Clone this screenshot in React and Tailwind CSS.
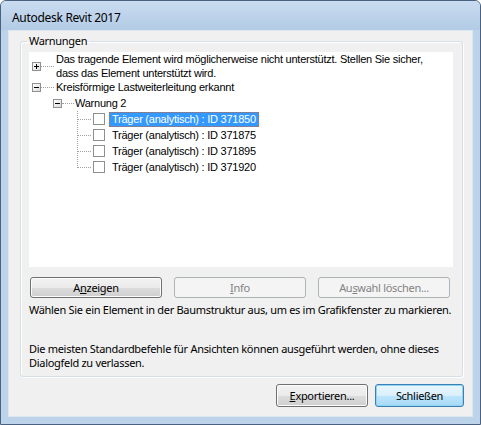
import React from "react";

const ui = { fontFamily: '"Noto Sans", "Open Sans", sans-serif' };
const tree = { fontFamily: '"Liberation Sans", Arial, sans-serif' };

function Expander({ minus }) {
  return (
    <span className="relative inline-block shrink-0 w-[9px] h-[9px] border border-[#919191] bg-gradient-to-br from-white to-[#dcdcdc]">
      <span className="absolute left-[1px] top-[3px] w-[5px] h-[1px] bg-black" />
      {!minus && <span className="absolute left-[3px] top-[1px] w-[1px] h-[5px] bg-black" />}
    </span>
  );
}

function HDots({ w }) {
  return <span className="inline-block shrink-0 h-0 border-t border-dotted border-[#a0a0a0]" style={{ width: w }} />;
}

function ChildRow({ id, selected }) {
  return (
    <div className="flex items-center h-[16px]">
      <HDots w={13} />
      <span className="ml-[2px] w-[12px] h-[12px] border border-[#8e8f8f] bg-white shrink-0" />
      <span
        className={
          "ml-[4px] h-[15px] px-[3px] leading-[15px] whitespace-nowrap " +
          (selected
            ? "bg-[#3399ff] text-white outline outline-1 outline-dotted outline-[#cc6633] -outline-offset-1"
            : "text-black")
        }
      >
        Träger (analytisch) : ID {id}
      </span>
    </div>
  );
}

function Btn({ children, disabled, dflt, className = "" }) {
  let cls =
    "rounded-[3px] border text-[11px] tracking-[-0.3px] flex items-center justify-center leading-none ";
  if (disabled) cls += "border-[#adb2b5] bg-[#f4f4f4] text-[#838383] ";
  else if (dflt)
    cls +=
      "border-[#3c7fb1] bg-[linear-gradient(#eaf6fd_0%,#d9f0fc_50%,#bee6fd_50%,#a7d9f5_100%)] text-black shadow-[inset_0_0_0_1px_#8fd3f7] ";
  else
    cls +=
      "border-[#707070] bg-[linear-gradient(#f2f2f2_0%,#ebebeb_50%,#dddddd_50%,#cfcfcf_100%)] text-black shadow-[inset_0_0_0_1px_#fcfcfc] ";
  return (
    <div className={cls + className} style={ui}>
      {children}
    </div>
  );
}

export default function App() {
  return (
    <div className="w-[481px] h-[425px] bg-white">
      <div className="w-[481px] h-[425px] rounded-t-[6px] border border-[#4a6280] bg-[#bcd3ea] flex flex-col overflow-hidden">
        <div
          className="h-[29px] pt-[9px] pl-[11px] bg-gradient-to-b from-[#c9dcf0] to-[#b3cbe6] text-[12px] leading-[16px] tracking-[-0.3px] text-black"
          style={ui}
        >
          Autodesk Revit 2017
        </div>
        <div className="mx-[7px] h-[387px] bg-[#f0f0f0] border border-[#dde7f1] flex flex-col">
          <fieldset className="mt-[3px] ml-[11px] w-[443px] h-[343px] border border-[#d5dfe5] rounded-[3px] shadow-[1px_1px_0_#ffffff,inset_1px_1px_0_#ffffff] pl-[8px] pr-[9px] pt-[4px] pb-0 min-w-0">
            <legend className="ml-[-2px] px-[2px] text-[11px] leading-[14px] tracking-[-0.3px] text-black" style={ui}>
              Warnungen
            </legend>
            <div className="w-[424px] h-[215px] bg-white text-[11px] tracking-[-0.24px] text-black" style={tree}>
              <div className="flex items-center h-[28px] pl-[3px]">
                <Expander />
                <HDots w={13} />
                <div className="ml-[2px] leading-[14px] whitespace-nowrap">
                  Das tragende Element wird möglicherweise nicht unterstützt. Stellen Sie sicher,
                  <br />
                  dass das Element unterstützt wird.
                </div>
              </div>
              <div className="flex items-center h-[15px] pl-[3px]">
                <Expander minus />
                <HDots w={13} />
                <span className="ml-[2px] whitespace-nowrap">Kreisförmige Lastweiterleitung erkannt</span>
              </div>
              <div className="flex items-center h-[16px] pl-[24px]">
                <Expander minus />
                <HDots w={12} />
                <span className="ml-[1px] whitespace-nowrap">Warnung 2</span>
              </div>
              <div className="flex ml-[48px]">
                <div className="w-0 border-l border-dotted border-[#a0a0a0] h-[57px]" />
                <div className="flex flex-col">
                  <ChildRow id="371850" selected />
                  <ChildRow id="371875" />
                  <ChildRow id="371895" />
                  <ChildRow id="371920" />
                </div>
              </div>
            </div>
            <div className="flex gap-[12px] mt-[10px] ml-[1px]">
              <Btn className="w-[132px] h-[21px]">
                <span>
                  A<u>n</u>zeigen
                </span>
              </Btn>
              <Btn disabled className="w-[132px] h-[21px]">
                <span>
                  <u>I</u>nfo
                </span>
              </Btn>
              <Btn disabled className="w-[132px] h-[21px]">
                <span>
                  Au<u>s</u>wahl löschen...
                </span>
              </Btn>
            </div>
            <div className="mt-[4px] text-[11px] leading-[16px] tracking-[-0.3px] text-black whitespace-nowrap" style={ui}>
              Wählen Sie ein Element in der Baumstruktur aus, um es im Grafikfenster zu markieren.
            </div>
            <div className="mt-[24px] text-[11px] leading-[14px] tracking-[-0.3px] text-black whitespace-nowrap" style={ui}>
              Die meisten Standardbefehle für Ansichten können ausgeführt werden, ohne dieses
              <br />
              Dialogfeld zu verlassen.
            </div>
          </fieldset>
          <div className="flex justify-end gap-[7px] mt-[7px] mr-[8px]">
            <Btn className="w-[92px] h-[23px]">
              <span>
                <u>E</u>xportieren...
              </span>
            </Btn>
            <Btn dflt className="w-[89px] h-[23px]">
              <span>Schließen</span>
            </Btn>
          </div>
        </div>
      </div>
    </div>
  );
}
